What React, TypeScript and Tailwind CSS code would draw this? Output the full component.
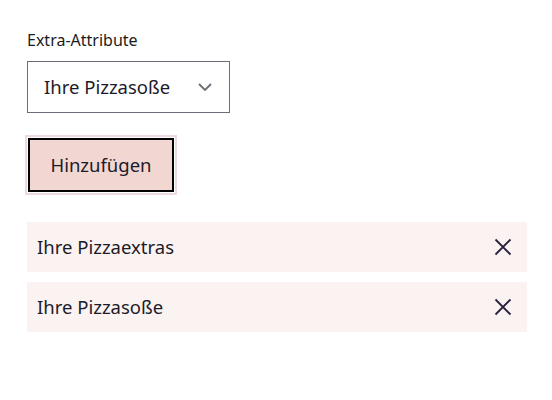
import { useState } from 'react';

const FONT = { fontFamily: '"Noto Sans", "Open Sans", sans-serif' };

function CloseIcon() {
  return (
    <svg width="18" height="18" viewBox="0 0 18 18" fill="none">
      <path d="M1.5 1.5L16.5 16.5M16.5 1.5L1.5 16.5" stroke="#2b1f3d" strokeWidth="1.8" />
    </svg>
  );
}

function Chevron() {
  return (
    <svg width="14" height="8" viewBox="0 0 14 8" fill="none">
      <path d="M1 1L7 7L13 1" stroke="#6b6e78" strokeWidth="1.8" />
    </svg>
  );
}

export default function App() {
  const [items, setItems] = useState(['Ihre Pizzaextras', 'Ihre Pizzasoße']);

  return (
    <div className="min-h-[400px] bg-white px-[27px] pt-[28px] text-[#1d1b2a]" style={FONT}>
      <label className="block text-[16px] leading-[24px] text-[#1b1b1b]">Extra-Attribute</label>
      <div className="mt-[9px] flex h-[52px] w-[203px] items-center justify-between border border-[#6b6e78] pl-[16px] pr-[17px]">
        <span className="text-[18.5px] text-[#1d1b2a]">Ihre Pizzasoße</span>
        <Chevron />
      </div>

      <div className="mt-[24px] inline-block p-[1px] ring-2 ring-[#efd9e0]">
        <button className="flex h-[54px] w-[146px] items-center justify-center border-2 border-black bg-[#f2d6d2] text-[18.5px] text-[#1d1b2a]">
          Hinzufügen
        </button>
      </div>

      <div className="mt-[29px] flex w-[500px] flex-col gap-[10px]">
        {items.map((item) => (
          <div key={item} className="flex h-[50px] items-center justify-between bg-[#faf3f1] pl-[10px] pr-[15px]">
            <span className="text-[18.5px] text-[#1d1b2a]">{item}</span>
            <button onClick={() => setItems(items.filter((i) => i !== item))}>
              <CloseIcon />
            </button>
          </div>
        ))}
      </div>
    </div>
  );
}
